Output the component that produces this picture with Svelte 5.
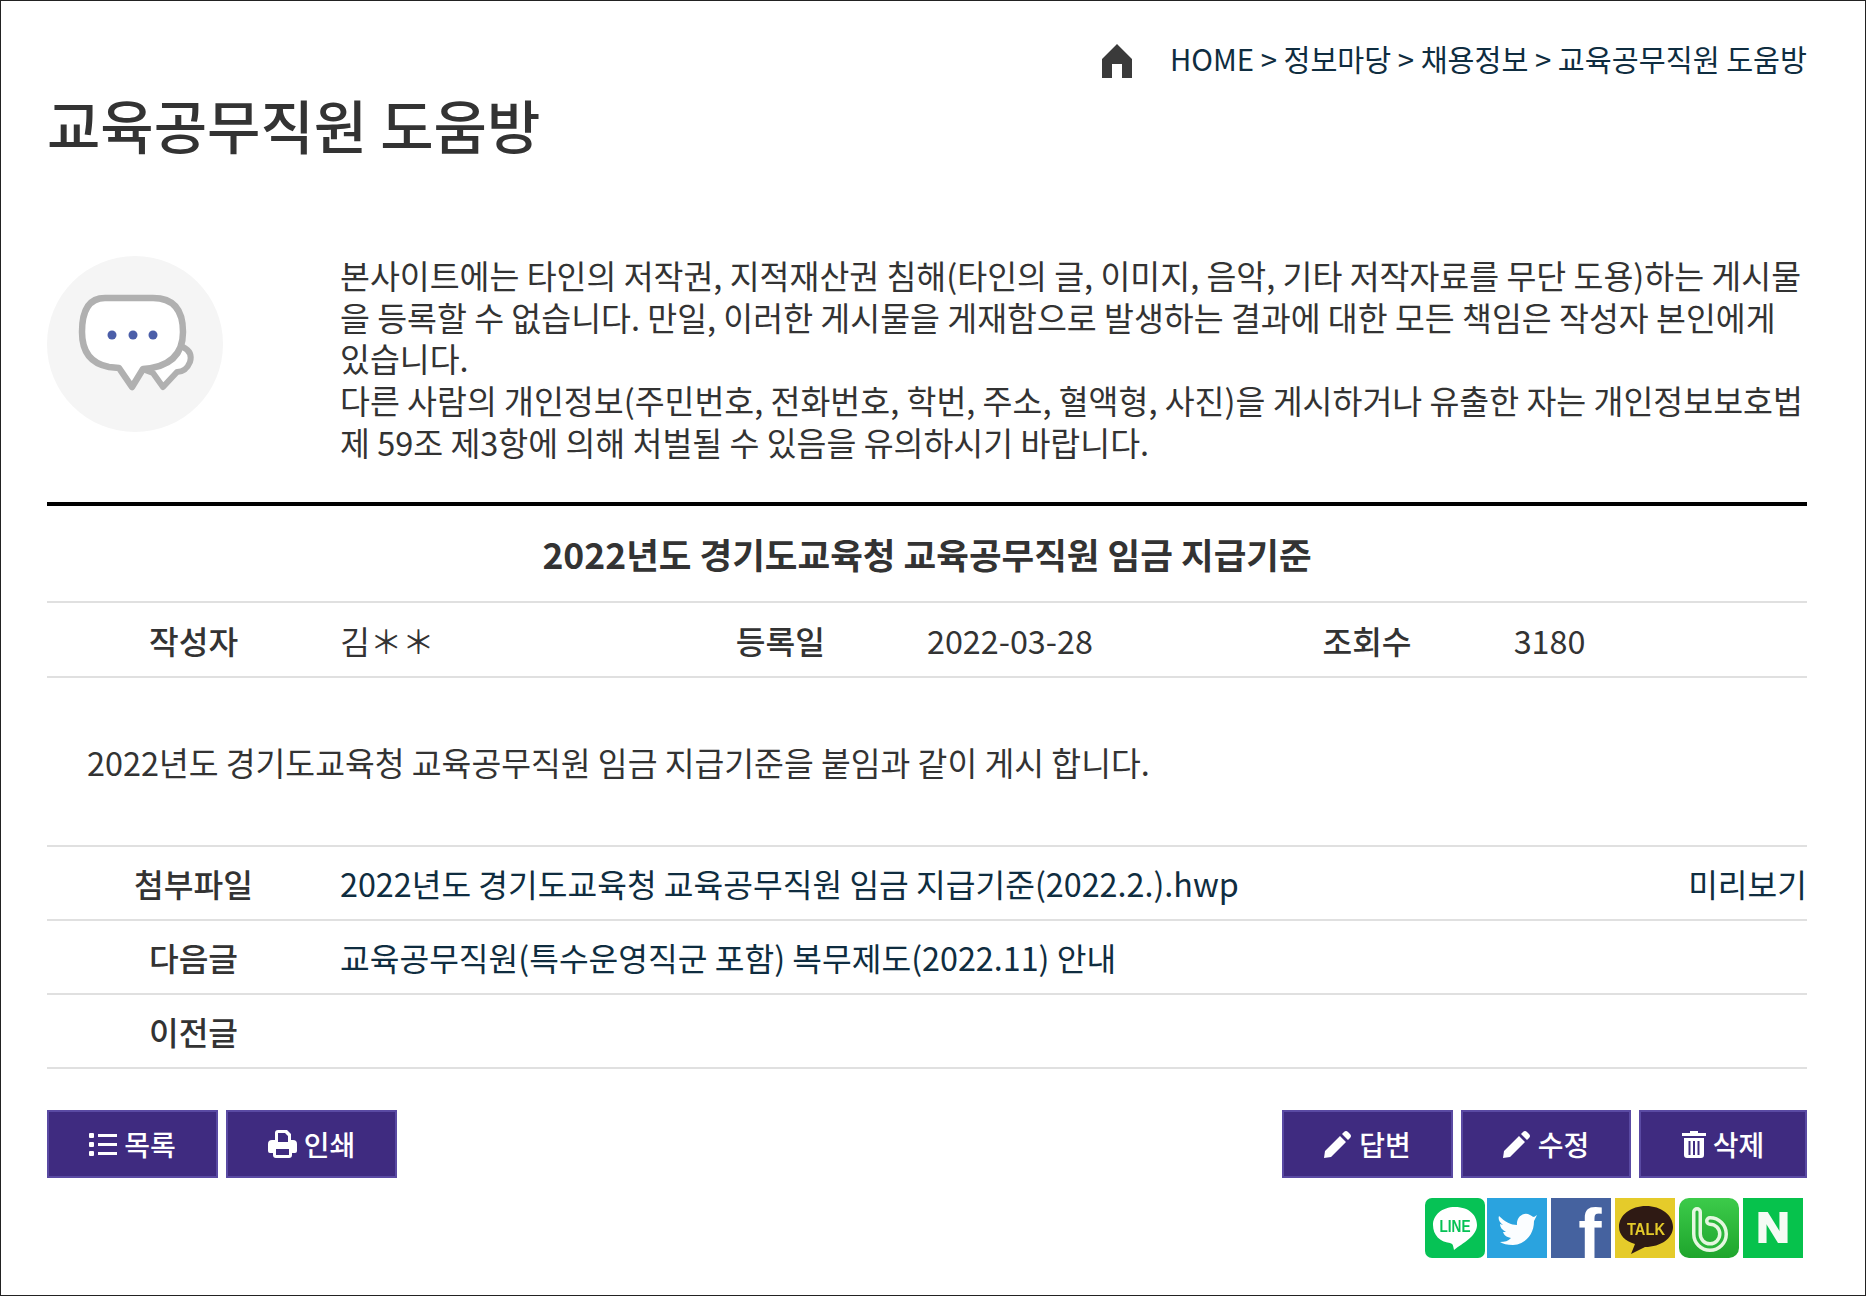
<script>
  const crumbs = ['HOME', '정보마당', '채용정보', '교육공무직원 도움방'];
  const meta = [
    ['작성자', '김＊＊'],
    ['등록일', '2022-03-28'],
    ['조회수', '3180']
  ];
  const notice = [
    '본사이트에는 타인의 저작권, 지적재산권 침해(타인의 글, 이미지, 음악, 기타 저작자료를 무단 도용)하는 게시물을 등록할 수 없습니다. 만일, 이러한 게시물을 게재함으로 발생하는 결과에 대한 모든 책임은 작성자 본인에게 있습니다.',
    '다른 사람의 개인정보(주민번호, 전화번호, 학번, 주소, 혈액형, 사진)을 게시하거나 유출한 자는 개인정보보호법 제 59조 제3항에 의해 처벌될 수 있음을 유의하시기 바랍니다.'
  ];
</script>

<div class="page">
  <nav class="crumbs">
    <svg class="home" viewBox="0 0 30 34" width="30" height="34">
      <path d="M15 0 L30 15 V34 H20 V20 H10 V34 H0 V15 Z" fill="#3a3a3a" />
    </svg>
    <span class="trail">{crumbs.join(' > ')}</span>
  </nav>
  <h1>교육공무직원 도움방</h1>

  <section class="notice">
    <div class="bubble">
      <svg viewBox="0 0 176 176" width="176" height="176">
        <path d="M136 91 Q146 96 143 106 Q139 116 130 116 L116 131 L106 117 L98 114" fill="#fff" stroke="#b0b0b0" stroke-width="6" stroke-linejoin="round" stroke-linecap="round" />
        <path d="M58 42 H106 Q136 42 136 76 Q136 110 96 113 L85 131 L72 112 L62 111 Q35 106 35 76 Q35 42 58 42 Z" fill="#fff" stroke="#b0b0b0" stroke-width="6.5" stroke-linejoin="round" />
        <circle cx="65" cy="79" r="4.5" fill="#4b5ea8" />
        <circle cx="86" cy="79" r="4.5" fill="#4b5ea8" />
        <circle cx="106" cy="79" r="4.5" fill="#4b5ea8" />
      </svg>
    </div>
    <div class="notice-text">
      {#each notice as line}
        <p>{line}</p>
      {/each}
    </div>
  </section>

  <article class="view">
    <h2>2022년도 경기도교육청 교육공무직원 임금 지급기준</h2>
    <div class="meta">
      {#each meta as m}
        <strong>{m[0]}</strong>
        <span>{m[1]}</span>
      {/each}
    </div>
    <div class="body">2022년도 경기도교육청 교육공무직원 임금 지급기준을 붙임과 같이 게시 합니다.</div>
    <div class="row">
      <strong>첨부파일</strong>
      <a href="#file" class="grow">2022년도 경기도교육청 교육공무직원 임금 지급기준(2022.2.).hwp</a>
      <a href="#preview">미리보기</a>
    </div>
    <div class="row">
      <strong>다음글</strong>
      <a href="#next" class="grow">교육공무직원(특수운영직군 포함) 복무제도(2022.11) 안내</a>
    </div>
    <div class="row">
      <strong>이전글</strong>
    </div>
  </article>

  <div class="actions">
    <div class="group">
      <button class="w-a">
        <svg viewBox="0 0 28 24" width="28" height="24" fill="#fff">
          <rect x="0" y="1" width="5" height="5" rx="1" /><rect x="0" y="10" width="5" height="5" rx="1" /><rect x="0" y="19" width="5" height="5" rx="1" />
          <rect x="9" y="2" width="19" height="3" /><rect x="9" y="11" width="19" height="3" /><rect x="9" y="20" width="19" height="3" />
        </svg>
        목록
      </button>
      <button class="w-a">
        <svg viewBox="0 0 29 28" width="29" height="28" fill="#fff">
          <path d="M7 3 Q7 0 10 0 H19 L23 4 V10 H25 Q29 10 29 14 V21 Q29 23 27 23 H24 V25 Q24 28 21 28 H8 Q5 28 5 25 V23 H2 Q0 23 0 21 V14 Q0 10 4 10 H7 Z M10 3 V12 H20 V6 L17 3 Z M8 19 V25 H21 V19 Z" fill-rule="evenodd" />
        </svg>
        인쇄
      </button>
    </div>
    <div class="group">
      <button class="w-a">
        <svg viewBox="0 0 28 28" width="28" height="28" fill="#fff">
          <path d="M0 28 L1 21 L16 6 L22 12 L7 27 Z M18 4 L20 2 Q22 0 24 2 L26 4 Q28 6 26 8 L24 10 Z" />
        </svg>
        답변
      </button>
      <button class="w-b">
        <svg viewBox="0 0 28 28" width="28" height="28" fill="#fff">
          <path d="M0 28 L1 21 L16 6 L22 12 L7 27 Z M18 4 L20 2 Q22 0 24 2 L26 4 Q28 6 26 8 L24 10 Z" />
        </svg>
        수정
      </button>
      <button class="w-c">
        <svg viewBox="0 0 24 28" width="24" height="28" fill="#fff">
          <path d="M8 1 H16 V3 H24 V6 H0 V3 H8 Z" />
          <path d="M2 8 H22 V25 Q22 28 19 28 H5 Q2 28 2 25 Z M6.5 11 V25 H8.5 V11 Z M11 11 V25 H13 V11 Z M15.5 11 V25 H17.5 V11 Z" fill-rule="evenodd" />
        </svg>
        삭제
      </button>
    </div>
  </div>

  <div class="social">
    <svg viewBox="0 0 60 60" width="60" height="60">
      <rect width="60" height="60" rx="7" fill="#06c255" />
      <path d="M30 9 C45 9 52 18 52 27 C52 38 38 45 29 52 C28 47 28 46 25 45 C15 44 8 37 8 27 C8 17 17 9 30 9 Z" fill="#fff" />
      <text x="30" y="34" text-anchor="middle" textLength="31" lengthAdjust="spacingAndGlyphs" class="s-line">LINE</text>
    </svg>
    <svg class="tw" viewBox="0 0 60 60" width="60" height="60">
      <rect width="60" height="60" fill="#2aa3df" />
      <path d="M12 18 C18 24 24 27 30 27 C29 19 37 13 43 17 C45 18 46 19 47 19 L50 17 L47 23 C47 37 38 46 26 47 C20 47 16 46 13 44 C18 44 21 43 24 40 C19 39 17 37 16 34 L19 34 C15 32 13 29 13 26 L16 27 C12 24 11 21 12 18 Z" fill="#fbfdff" />
    </svg>
    <svg viewBox="0 0 60 60" width="60" height="60">
      <rect width="60" height="60" fill="#45629f" />
      <text x="39" y="60" text-anchor="middle" class="s-f">f</text>
    </svg>
    <svg viewBox="0 0 60 60" width="60" height="60">
      <rect width="60" height="60" fill="#e5cb2a" />
      <path d="M31 8 C46 8 58 17 58 29 C58 40 46 49 30 49 L16 56 L20 46 C10 43 4 37 4 29 C4 17 16 8 31 8 Z" fill="#2f1a14" />
      <text x="31" y="37" text-anchor="middle" textLength="38" lengthAdjust="spacingAndGlyphs" class="s-talk">TALK</text>
    </svg>
    <svg viewBox="0 0 60 60" width="60" height="60">
      <defs>
        <linearGradient id="bandGreen" x1="0" y1="0" x2="0" y2="1">
          <stop offset="0" stop-color="#3ccb4a" />
          <stop offset="1" stop-color="#1ea52c" />
        </linearGradient>
      </defs>
      <rect width="60" height="60" rx="10" fill="url(#bandGreen)" />
      <path d="M18 14 V36 A13 13 0 1 0 31 23" fill="none" stroke="#e5f7e0" stroke-width="10" stroke-linecap="round" />
      <path d="M18 14 V36 A13 13 0 1 0 31 23" fill="none" stroke="#2ab53a" stroke-width="3" stroke-linecap="round" />
    </svg>
    <svg viewBox="0 0 60 60" width="60" height="60">
      <rect width="60" height="60" fill="#06c24c" />
      <text x="30" y="44" text-anchor="middle" textLength="33" lengthAdjust="spacingAndGlyphs" class="s-n">N</text>
    </svg>
  </div>
</div>

<style>
  :global(body) {
    margin: 0;
    background: #fff;
  }

  .page {
    box-sizing: border-box;
    width: 1866px;
    height: 1296px;
    border: 1px solid #222;
    padding: 0 58px 0 46px;
    font-family: "Noto Sans CJK KR", "Noto Sans", sans-serif;
    color: #333;
    font-size: 32.3px;
  }

  .crumbs {
    display: flex;
    justify-content: flex-end;
    align-items: center;
    gap: 38px;
    height: 41px;
    padding-top: 37px;
    color: #0f2d40;
  }

  .trail {
    font-size: 29.3px;
    line-height: 41px;
  }

  .home {
    margin-top: 4px;
  }

  h1 {
    margin: 3px 0 0;
    font-size: 58px;
    line-height: 84px;
    font-weight: 500;
  }

  .notice {
    display: flex;
    margin-top: 88px;
    height: 248px;
  }

  .bubble {
    flex: 0 0 293px;
    padding-top: 2px;
    filter: blur(0.5px);
  }

  .bubble svg {
    display: block;
    background: #f5f5f5;
    border-radius: 50%;
  }

  .notice-text {
    font-size: 32.5px;
    line-height: 41.7px;
  }

  .notice-text p {
    margin: 0;
  }

  .view {
    border-top: 4px solid #000;
  }

  h2 {
    margin: 0;
    height: 97px;
    line-height: 96px;
    text-align: center;
    font-size: 35.5px;
    font-weight: 700;
    border-bottom: 2px solid #e0e0e0;
    box-sizing: border-box;
  }

  .meta {
    display: grid;
    grid-template-columns: repeat(6, 1fr);
    align-items: center;
    box-sizing: border-box;
    height: 75px;
    border-bottom: 2px solid #e0e0e0;
  }

  strong {
    font-weight: 500;
    text-align: center;
  }

  .meta strong {
    display: block;
  }

  .body {
    display: flex;
    align-items: center;
    box-sizing: border-box;
    height: 169px;
    padding-left: 40px;
    font-size: 32.4px;
    border-bottom: 2px solid #e0e0e0;
  }

  .row {
    display: flex;
    align-items: center;
    box-sizing: border-box;
    height: 74px;
    border-bottom: 2px solid #e0e0e0;
  }

  .row strong {
    flex: 0 0 293px;
  }

  a {
    color: #0f2d40;
    text-decoration: none;
  }

  .grow {
    flex: 1;
  }

  .actions {
    display: flex;
    justify-content: space-between;
    margin-top: 41px;
  }

  .group {
    display: flex;
    gap: 8px;
  }

  button {
    display: flex;
    align-items: center;
    justify-content: center;
    gap: 7px;
    height: 68px;
    padding: 0;
    background: #3f2b80;
    border: 2px solid #5a4aa3;
    color: #fff;
    font: 500 28px "Noto Sans CJK KR", sans-serif;
  }

  .w-a {
    width: 171px;
  }

  .w-b {
    width: 170px;
  }

  .w-c {
    width: 168px;
  }

  .social {
    display: flex;
    justify-content: flex-end;
    gap: 4px;
    margin-top: 20px;
    padding-right: 4px;
  }

  .social svg {
    display: block;
    filter: blur(0.5px);
  }

  .tw {
    margin-left: -2px;
  }

  .s-line {
    font: 700 16px "Liberation Sans", sans-serif;
    fill: #06c255;
  }

  .s-f {
    font: 700 70px "Liberation Sans", sans-serif;
    fill: #fff;
  }

  .s-talk {
    font: 700 16px "Liberation Sans", sans-serif;
    fill: #e5cb2a;
  }

  .s-n {
    font: 700 42px "Liberation Sans", sans-serif;
    fill: #f4fbf4;
    stroke: #f4fbf4;
    stroke-width: 2px;
  }
</style>
